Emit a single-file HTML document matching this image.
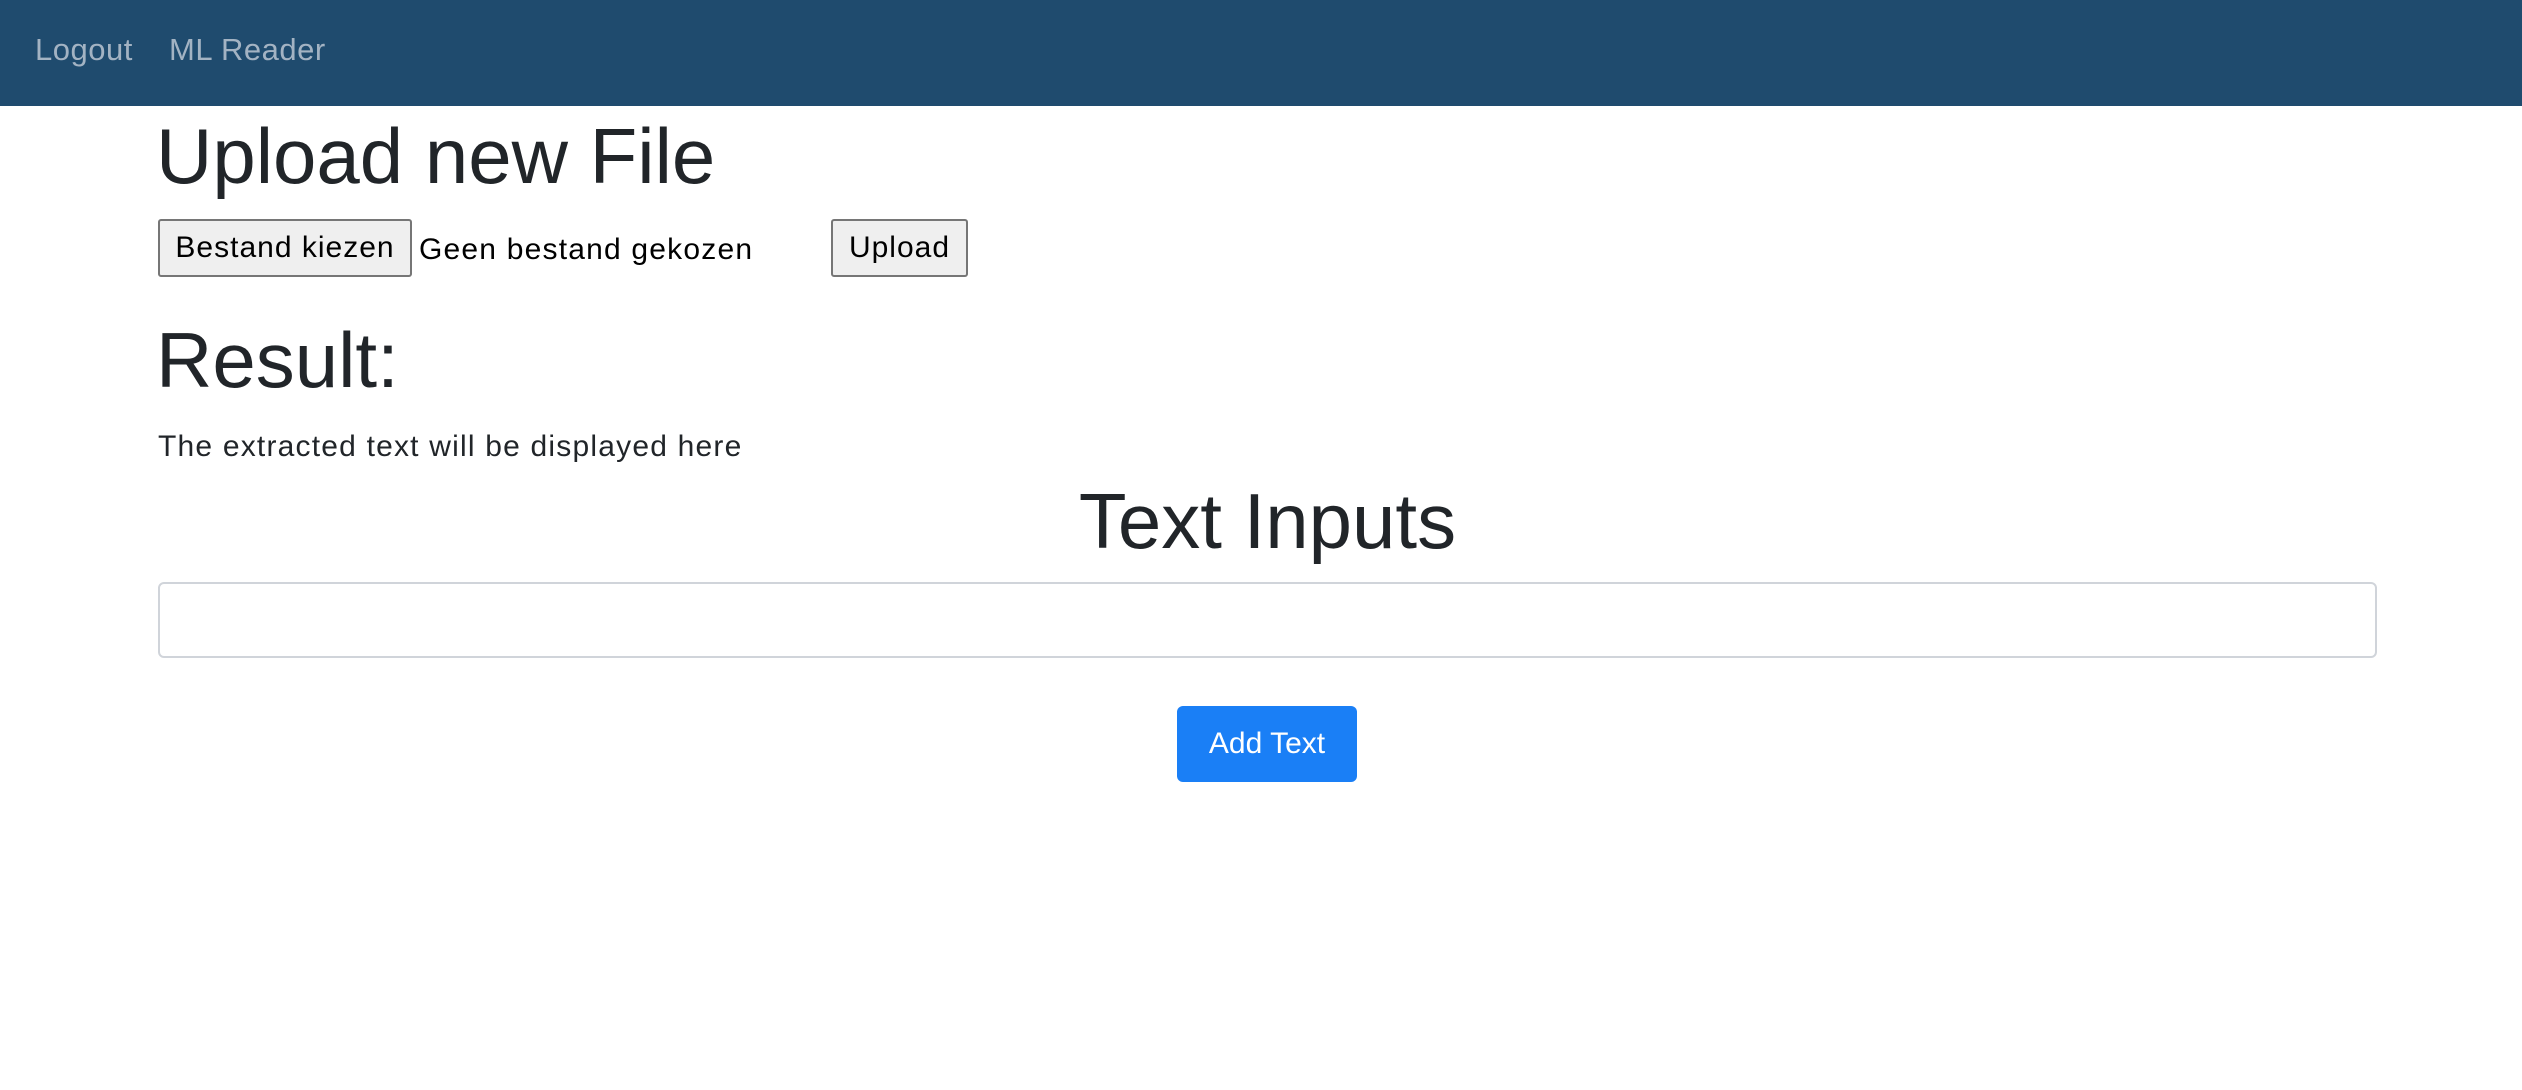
<!DOCTYPE html>
<html><head><style>
body{margin:0;width:2522px;height:1090px;background:#fff;font-family:"Liberation Sans",sans-serif;color:#212529;position:relative;overflow:hidden}
.nav{position:absolute;left:0;top:0;width:2522px;height:106px;background:#1f4b6e}
.nav span{position:absolute;top:32px;font-size:31px;color:#a3b3c3;letter-spacing:0.5px}
.a{position:absolute;white-space:nowrap;letter-spacing:1.2px}
.btn{position:absolute;background:#efefef;border:2px solid #767676;border-radius:3px;font-size:30px;color:#000;display:flex;align-items:center;justify-content:center;box-sizing:border-box;letter-spacing:1px}
h1{margin:0;font-weight:500;font-size:78px;position:absolute;line-height:1}
</style></head><body>
<div class="nav"><span style="left:35px">Logout</span><span style="left:169px">ML Reader</span></div>
<h1 style="left:156px;top:117px">Upload new File</h1>
<div class="btn" style="left:158px;top:219px;width:254px;height:58px">Bestand kiezen</div>
<div class="a" style="left:419px;top:233px;font-size:30px;color:#000">Geen bestand gekozen</div>
<div class="btn" style="left:831px;top:219px;width:137px;height:58px">Upload</div>
<h1 style="left:156px;top:321px">Result:</h1>
<div class="a" style="left:158px;top:430px;font-size:30px">The extracted text will be displayed here</div>
<h1 style="left:0;width:2535px;text-align:center;top:482px">Text Inputs</h1>
<div style="position:absolute;left:158px;top:582px;width:2219px;height:76px;border:2px solid #d0d4da;border-radius:6px;box-sizing:border-box"></div>
<div style="position:absolute;left:1177px;top:706px;width:180px;height:76px;background:#1a7ff6;border-radius:6px;color:#fff;font-size:30px;display:flex;align-items:center;justify-content:center">Add Text</div>
</body></html>
